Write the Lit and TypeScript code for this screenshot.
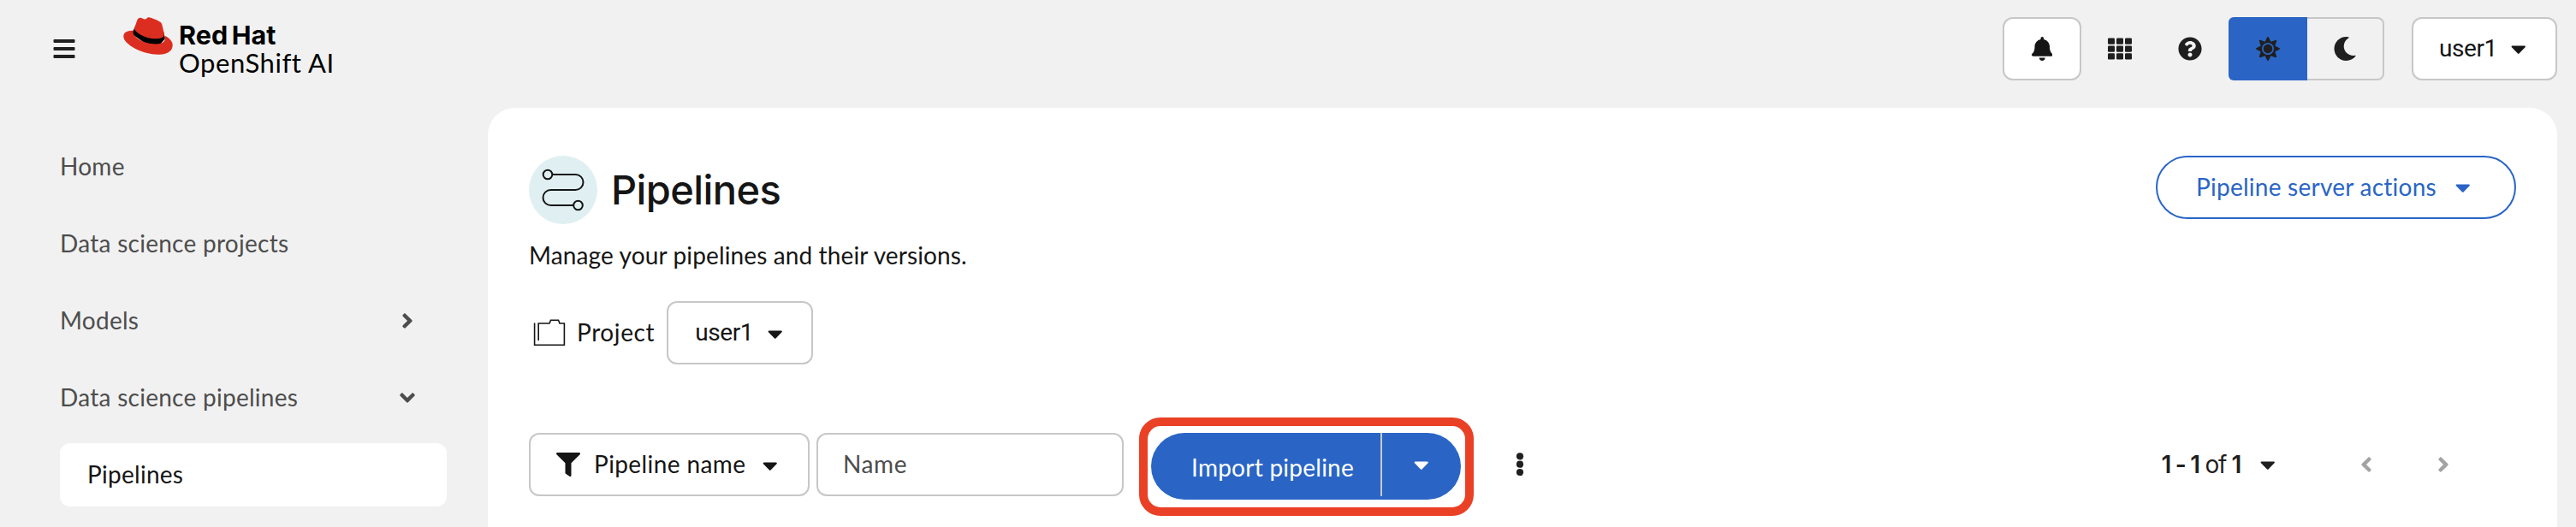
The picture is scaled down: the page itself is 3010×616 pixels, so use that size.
import { LitElement, html, css, svg } from "lit";
import { customElement, property } from "lit/decorators.js";
import { classMap } from "lit/directives/class-map.js";

const ICONS: Record<string, { w: number; d: string }> = {
  bell: { w: 448, d: "M224 512c35.32 0 63.97-28.65 63.97-64H160.03c0 35.35 28.65 64 63.97 64zm215.39-149.71c-19.32-20.76-55.47-51.99-55.47-154.29 0-77.7-54.48-139.9-127.94-155.16V32c0-17.67-14.32-32-31.98-32s-31.98 14.33-31.98 32v20.84C118.56 68.1 64.08 130.3 64.08 208c0 102.3-36.15 133.53-55.47 154.29-6 6.45-8.66 14.16-8.61 21.71.11 16.4 12.98 32 32.1 32h383.8c19.12 0 32-15.6 32.1-32 .05-7.55-2.61-15.27-8.61-21.71z" },
  help: { w: 512, d: "M504 256c0 136.997-111.043 248-248 248S8 392.997 8 256C8 119.083 119.043 8 256 8s248 111.083 248 248zM262.655 90c-54.497 0-89.255 22.957-116.549 63.758-3.536 5.286-2.353 12.415 2.715 16.258l34.699 26.31c5.205 3.947 12.621 3.008 16.665-2.122 17.864-22.658 30.113-35.797 57.303-35.797 20.429 0 45.698 13.148 45.698 32.958 0 14.976-12.363 22.667-32.534 33.976C247.128 238.528 216 254.941 216 296v4c0 6.627 5.373 12 12 12h56c6.627 0 12-5.373 12-12v-1.333c0-28.462 83.186-29.647 83.186-106.667 0-58.002-60.165-102-116.531-102zM256 338c-25.365 0-46 20.635-46 46 0 25.364 20.635 46 46 46s46-20.636 46-46c0-25.365-20.635-46-46-46z" },
  sun: { w: 512, d: "M256 160c-52.9 0-96 43.1-96 96s43.1 96 96 96 96-43.1 96-96-43.1-96-96-96zm246.4 80.5l-94.7-47.3 33.5-100.4c4.5-13.6-8.4-26.5-21.9-21.9l-100.4 33.5-47.4-94.8c-6.4-12.8-24.6-12.8-31 0l-47.3 94.7L92.7 70.8c-13.6-4.5-26.5 8.4-21.9 21.9l33.5 100.4-94.7 47.4c-12.8 6.4-12.8 24.6 0 31l94.7 47.3-33.5 100.5c-4.5 13.6 8.4 26.5 21.9 21.9l100.4-33.5 47.3 94.7c6.4 12.8 24.6 12.8 31 0l47.3-94.7 100.4 33.5c13.6 4.5 26.5-8.4 21.9-21.9l-33.5-100.4 94.7-47.3c13-6.5 13-24.7.2-31.1zm-155.9 106c-49.9 49.9-131.1 49.9-181 0-49.9-49.9-49.9-131.1 0-181 49.9-49.9 131.1-49.9 181 0 49.9 49.9 49.9 131.1 0 181z" },
  moon: { w: 512, d: "M283.211 512c78.962 0 151.079-35.925 198.857-94.792 7.068-8.708-.639-21.43-11.562-19.35-124.203 23.654-238.262-71.576-238.262-196.954 0-72.222 38.662-138.635 101.498-174.394 9.686-5.512 7.25-20.197-3.756-22.23A258.156 258.156 0 0 0 283.211 0c-141.309 0-256 114.511-256 256 0 141.309 114.511 256 256 256z" },
  filter: { w: 512, d: "M487.976 0H24.028C2.71 0-8.047 25.866 7.058 40.971L192 225.941V432c0 7.831 3.821 15.17 10.237 19.662l80 55.98C298.02 518.69 320 507.493 320 487.98V225.941l184.947-184.97C520.021 25.896 509.338 0 487.976 0z" },
  caret: { w: 320, d: "M31.3 192h257.3c17.8 0 26.7 21.5 14.1 34.1L174.1 354.8c-7.8 7.8-20.5 7.8-28.3 0L17.2 226.1C4.6 213.5 13.5 192 31.3 192z" },
  angle: { w: 256, d: "M224.3 273l-136 136c-9.4 9.4-24.6 9.4-33.9 0l-22.6-22.6c-9.4-9.4-9.4-24.6 0-33.9l96.4-96.4-96.4-96.4c-9.4-9.4-9.4-24.6 0-33.9L54.3 103c9.4-9.4 24.6-9.4 33.9 0l136 136c9.5 9.4 9.5 24.6.1 34z" },
};

@customElement("ui-icon")
class UiIcon extends LitElement {
  @property() name = "caret";
  static styles = css`
    :host { display: block; flex: none; line-height: 0; }
    svg { display: block; height: 28px; width: auto; fill: currentColor; }
  `;
  render() {
    const i = ICONS[this.name];
    return html`<svg viewBox="0 0 ${i.w} 512" width=${(i.w * 28) / 512} height="28"><path d=${i.d}></path></svg>`;
  }
}

interface NavItem { label: string; state?: "open" | "closed"; current?: boolean }

const NAV: NavItem[] = [
  { label: "Home" },
  { label: "Data science projects" },
  { label: "Models", state: "closed" },
  { label: "Data science pipelines", state: "open" },
  { label: "Pipelines", current: true },
];

@customElement("app-header")
class AppHeader extends LitElement {
  static styles = css`
    :host { display: flex; align-items: flex-start; height: 126px; padding: 0 22px 0 62px; box-sizing: border-box; color: #1f1f1f; }
    svg { display: block; }
    .menu { margin-top: 45px; }
    .brand { display: flex; margin: 20px 0 0 56px; color: #000; }
    .hat { margin-right: 7px; }
    .names { display: flex; flex-direction: column; white-space: nowrap; }
    .company { font: 700 30.5px/32px Inter, sans-serif; letter-spacing: 0.1px; word-spacing: -3px; padding-top: 5px; }
    .product { font: 400 31px/32px Lato, sans-serif; letter-spacing: 0.55px; }
    .tools { display: flex; margin: 20px 0 0 auto; height: 74px; align-items: stretch; }
    .tool { display: flex; align-items: center; justify-content: center; box-sizing: border-box; }
    .bell { width: 92px; border: 2px solid #c7c7c7; border-radius: 12px; background: #fff; color: #151515; }
    .apps { width: 90px; }
    .help { width: 74px; }
    .toggle { display: flex; margin: 0 32px 0 8px; }
    .light { width: 92px; background: #2a65c6; border-radius: 6px 0 0 6px; }
    .dark { width: 90px; border: 2px solid #c7c7c7; border-left: 0; border-radius: 0 8px 8px 0; }
    .user { width: 170px; border: 2px solid #c7c7c7; border-radius: 12px; background: #fff; justify-content: flex-start; padding-left: 30px; font: 28px/42px Roboto, sans-serif; letter-spacing: -0.4px; color: #151515; }
    .user ui-icon { margin-left: 16px; }
  `;
  render() {
    return html`
      <svg class="menu" width="26" height="24" viewBox="0 0 26 24" fill="currentColor">
        ${[1, 10, 19].map((y) => svg`<rect x="0.5" y=${y} width="25" height="4" rx="1"></rect>`)}
      </svg>
      <div class="brand">
        <svg class="hat" width="58" height="44" viewBox="0 2.8 24 18.4">
          <path d="M4.8 9.4 5.5 7.6 19.6 10 20.33 13.4 18 16 12 16.6 4 11z" fill="#000"></path>
          <path fill="#dc2e20" d="M16.009 13.386c1.577 0 3.86-.326 3.86-2.202a1.765 1.765 0 0 0-.04-.431l-.94-4.08c-.216-.898-.406-1.305-1.982-2.093-1.223-.625-3.888-1.658-4.676-1.658-.733 0-.947.946-1.822.946-.842 0-1.467-.706-2.255-.706-.757 0-1.25.515-1.63 1.576 0 0-1.06 2.99-1.197 3.424a.81.81 0 0 0-.028.245c0 1.162 4.577 4.974 10.71 4.974m4.101-1.435c.218 1.032.218 1.14.218 1.277 0 1.765-1.984 2.745-4.593 2.745-5.895.004-11.06-3.451-11.06-5.734a2.326 2.326 0 0 1 .19-.925C2.746 9.415 0 9.794 0 12.217c0 3.969 9.405 8.861 16.851 8.861 5.71 0 7.149-2.582 7.149-4.62 0-1.605-1.387-3.425-3.887-4.512"></path>
        </svg>
        <div class="names"><span class="company">Red Hat</span><span class="product">OpenShift AI</span></div>
      </div>
      <div class="tools">
        <div class="tool bell"><ui-icon name="bell"></ui-icon></div>
        <div class="tool apps">
          <svg width="28" height="26" viewBox="0 0 28 26" fill="currentColor">
            ${[0.5, 9.5, 18.2].map((y) => [0, 10, 20].map((x) => svg`<rect x=${x} y=${y} width="8" height="7.2" rx="1.2"></rect>`))}
          </svg>
        </div>
        <div class="tool help"><ui-icon name="help"></ui-icon></div>
        <div class="toggle">
          <div class="tool light"><ui-icon name="sun"></ui-icon></div>
          <div class="tool dark"><ui-icon name="moon"></ui-icon></div>
        </div>
        <div class="tool user"><span>user1</span><ui-icon name="caret"></ui-icon></div>
      </div>
    `;
  }
}

@customElement("app-nav")
class AppNav extends LitElement {
  static styles = css`
    :host { display: flex; flex-direction: column; gap: 16px; width: 570px; flex: none; box-sizing: border-box; padding: 32px 48px 0 70px; font: 28px/42px Lato, sans-serif; letter-spacing: 0.27px; }
    .item { display: flex; align-items: center; justify-content: space-between; height: 74px; box-sizing: border-box; padding-right: 39px; color: #4d4d4d; }
    .label { padding-bottom: 2px; }
    .current { background: #fff; color: #151515; border-radius: 12px; padding-left: 32px; }
    .down { transform: rotate(90deg); }
  `;
  render() {
    return NAV.map((n) => html`
      <div class=${classMap({ item: true, current: !!n.current })}>
        <span class="label">${n.label}</span>
        ${n.state ? html`<ui-icon class=${classMap({ down: n.state === "open" })} name="angle"></ui-icon>` : ""}
      </div>`);
  }
}

@customElement("pipelines-page")
class PipelinesPage extends LitElement {
  static styles = css`
    :host { display: block; flex: none; width: 2418px; height: 490px; box-sizing: border-box; padding: 56px 48px 0; background: #fff; border-radius: 32px 32px 0 0; color: #151515; font: 28px/42px Lato, sans-serif; letter-spacing: 0.25px; white-space: nowrap; }
    svg { display: block; }
    .title { display: flex; height: 80px; }
    .badge { display: flex; align-items: center; justify-content: center; width: 80px; height: 80px; border-radius: 50%; background: #e0f0f2; }
    h1 { margin: 0 0 0 16px; font: 500 47px/80px Inter, sans-serif; letter-spacing: -0.6px; }
    .actions { margin-left: auto; display: flex; align-items: center; box-sizing: border-box; width: 421px; height: 74px; padding-left: 45px; border: 2px solid #2a65c6; border-radius: 37px; color: #2a65c6; }
    .actions span { padding-bottom: 2px; }
    .actions ui-icon { margin-left: 22px; }
    .summary { margin-top: 15px; letter-spacing: 0.13px; }
    .project { display: flex; align-items: center; height: 74px; margin-top: 33px; }
    .folder { margin: 0 13px 0 5px; }
    .project-name { letter-spacing: 0.6px; padding-bottom: 2px; }
    .box { display: flex; align-items: center; box-sizing: border-box; height: 74px; border: 2px solid #c7c7c7; border-radius: 12px; }
    .picker { width: 171px; margin-left: 14px; padding-left: 31px; font-family: Roboto, sans-serif; letter-spacing: -0.4px; }
    .picker ui-icon { margin: 2px 0 0 17px; }
    .toolbar { display: flex; align-items: flex-start; height: 74px; margin-top: 80px; }
    .attribute { width: 328px; padding-left: 30px; }
    .attribute span { margin-left: 16px; letter-spacing: 0.4px; padding-bottom: 2px; }
    .attribute ui-icon:last-child { margin: 1px 0 0 20px; }
    .search { width: 359px; margin-left: 8px; padding: 0 0 2px 29px; color: #4d4d4d; letter-spacing: 0.6px; }
    .callout { box-sizing: border-box; width: 391px; height: 115px; margin: -18px 0 0 18px; padding: 8px 5px 9px 4px; border: 10px solid #ea4025; border-radius: 25px; }
    .split { display: flex; width: 362px; height: 78px; border-radius: 39px; background: #2a65c6; color: #fff; }
    .import { width: 270px; height: 74px; box-sizing: border-box; padding: 19px 0 0 47px; border-right: 2px solid #c7c7c7; }
    .more { width: 92px; height: 74px; display: flex; align-items: center; justify-content: center; }
    .kebab { margin: 22px 0 0 49px; }
    .pages { display: flex; align-items: center; height: 74px; margin-left: auto; padding-right: 78px; color: #1f1f1f; }
    .range { display: block; width: 99px; font-family: Inter, sans-serif; letter-spacing: -1.3px; }
    .range b { font-weight: 600; }
    .pages ui-icon { margin-left: 16px; }
    .pages ui-icon.prev { margin-left: 100px; color: #a3a3a3; transform: rotate(180deg); }
    .pages ui-icon.next { margin-left: 76px; color: #a3a3a3; }
  `;
  render() {
    return html`
      <div class="title">
        <div class="badge">
          <svg width="50" height="50" viewBox="0 0 50 50" fill="none" stroke="#151515" stroke-width="2">
            <circle cx="7" cy="7" r="5.3"></circle><circle cx="42.5" cy="43" r="5.3"></circle>
            <path d="M12.5 7H39.5a8.8 8.8 0 0 1 0 18H10.5a8.8 8.8 0 0 0 0 18H37"></path>
          </svg>
        </div>
        <h1>Pipelines</h1>
        <div class="actions"><span>Pipeline server actions</span><ui-icon name="caret"></ui-icon></div>
      </div>
      <div class="summary">Manage your pipelines and their versions.</div>
      <div class="project">
        <svg class="folder" width="38" height="32" viewBox="0 0 38 32" fill="none" stroke="#151515" stroke-width="1.6">
          <path d="M1.6 4.5V30.2H36.4V5H31L29.5 1.2H20.5L19 5H6.2V25"></path>
        </svg>
        <span class="project-name">Project</span>
        <div class="box picker"><span>user1</span><ui-icon name="caret"></ui-icon></div>
      </div>
      <div class="toolbar">
        <div class="box attribute"><ui-icon name="filter"></ui-icon><span>Pipeline name</span><ui-icon name="caret"></ui-icon></div>
        <div class="box search">Name</div>
        <div class="callout">
          <div class="split"><div class="import">Import pipeline</div><div class="more"><ui-icon name="caret"></ui-icon></div></div>
        </div>
        <svg class="kebab" width="10" height="30" viewBox="0 0 10 30" fill="#1f1f1f">
          ${[5.3, 14.7, 24].map((y) => svg`<circle cx="5" cy=${y} r="4.1"></circle>`)}
        </svg>
        <div class="pages">
          <span class="range"><b>1 - 1</b> of <b>1</b></span><ui-icon name="caret"></ui-icon>
          <ui-icon class="prev" name="angle"></ui-icon><ui-icon class="next" name="angle"></ui-icon>
        </div>
      </div>
    `;
  }
}

@customElement("app-root")
class AppRoot extends LitElement {
  static styles = css`
    :host { display: block; width: 3010px; height: 616px; overflow: hidden; background: #f1f1f1; }
    .body { display: flex; }
  `;
  render() {
    return html`<app-header></app-header><div class="body"><app-nav></app-nav><pipelines-page></pipelines-page></div>`;
  }
}
